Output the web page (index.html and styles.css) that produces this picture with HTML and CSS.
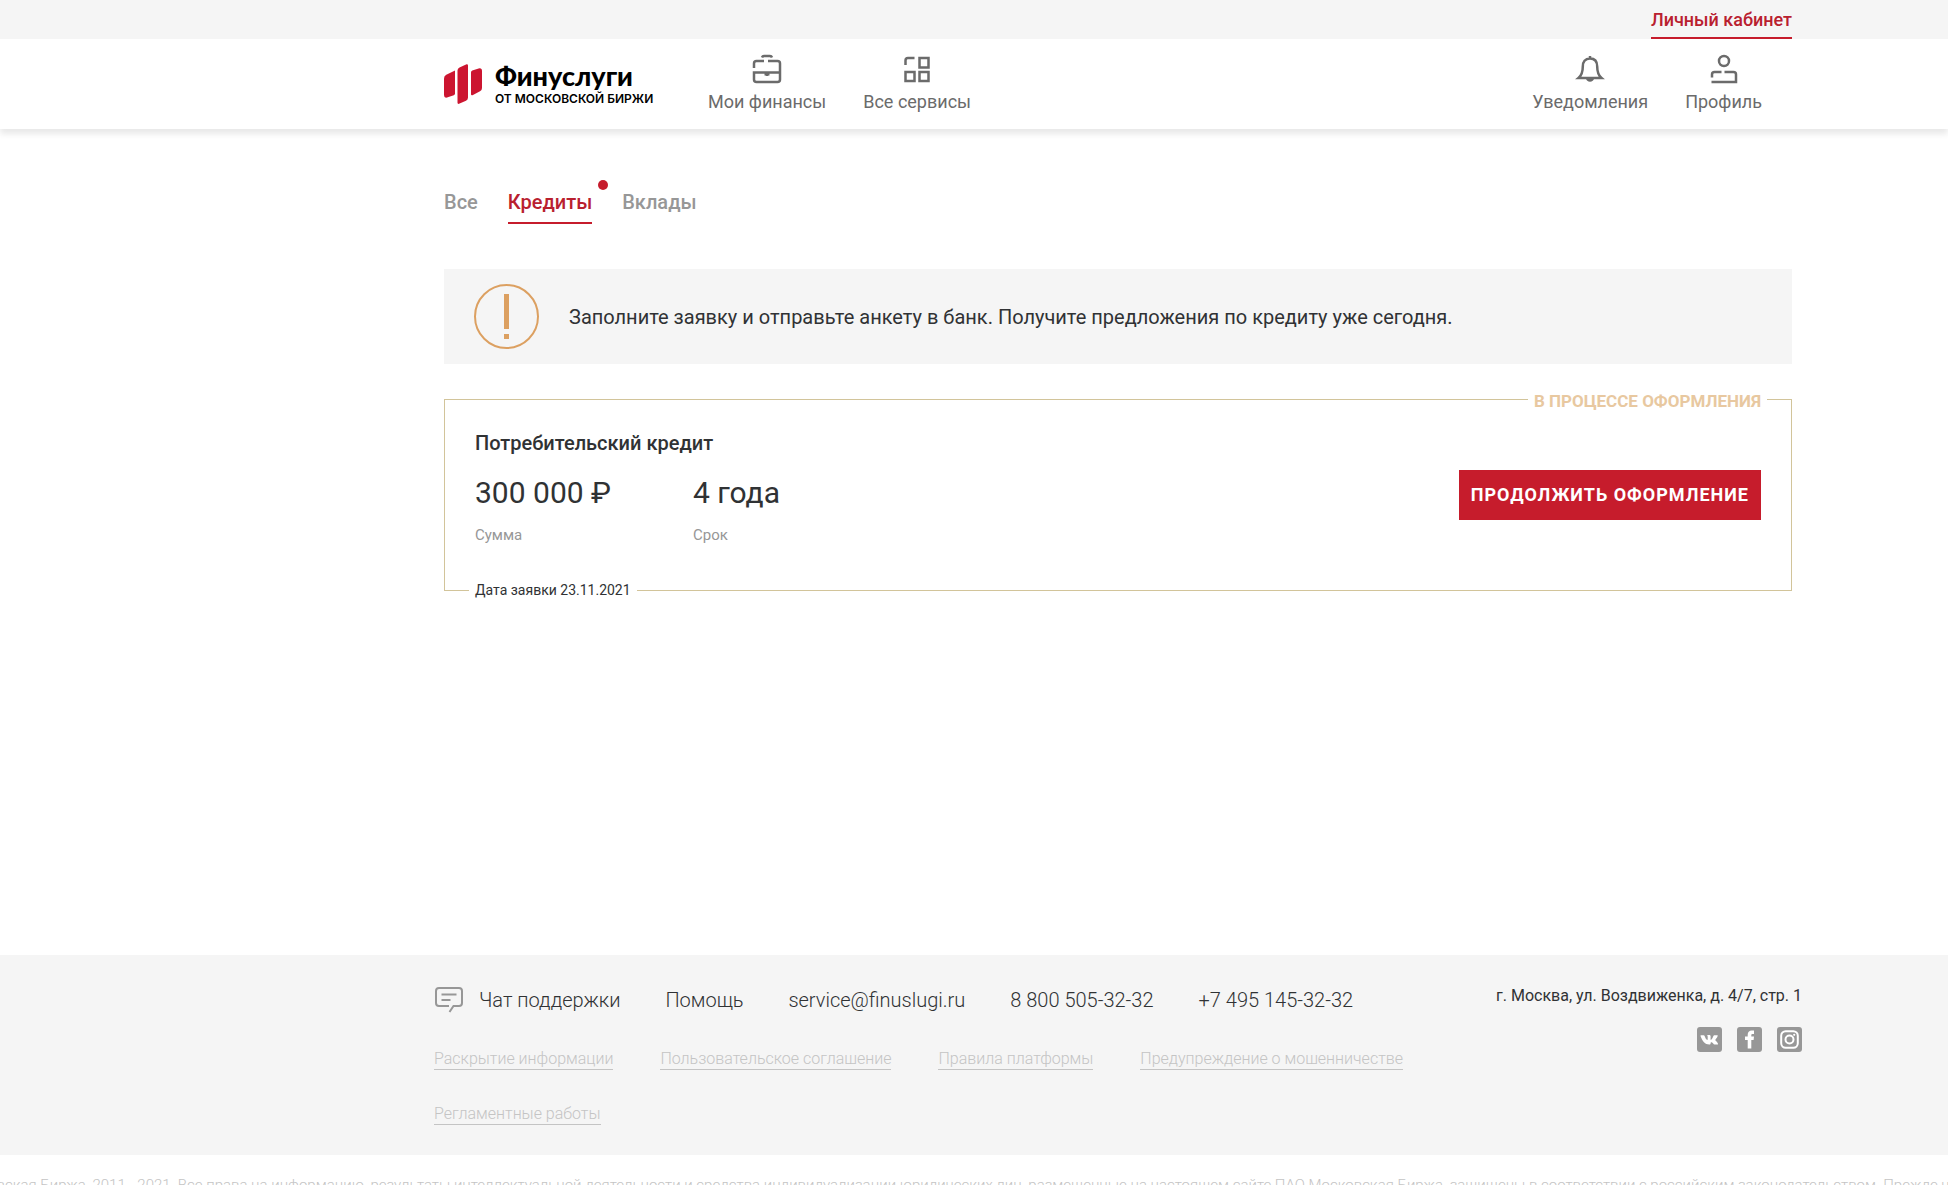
FILE: index.html
```html
<!DOCTYPE html>
<html lang="ru">
<head>
<meta charset="utf-8">
<meta name="viewport" content="width=device-width, initial-scale=1">
<title>Финуслуги — Личный кабинет</title>
<link rel="stylesheet" href="styles.css">
</head>
<body>
<div class="topbar">
  <a class="topbar-link" href="#">Личный кабинет</a>
</div>

<header class="header">
  <a class="logo" href="#">
    <svg class="logo-mark" viewBox="0 0 38 40" aria-hidden="true">
      <path d="M0 14.500q0-2.500 2.300-3.700L11 6.600V29.500q0 1.200-1.200 1.800L3 33.600Q0 34.300 0 31z"/>
      <path d="M13.500 6.500q0-2.200 2-3.100L22.600.2Q24 0 24 1.500V33.500q0 2.200-2 3.200L15 39.800q-1.500.400-1.500-1z"/>
      <path d="M27 8.500q0-1.400 1.300-2L34.600 4.500Q38 3.800 38 7V24q0 2.200-2 3.200L28.500 31.200Q27 31.700 27 30.200z"/>
    </svg>
    <span class="logo-text">
      <span class="logo-name">Финуслуги</span>
      <span class="logo-sub">ОТ МОСКОВСКОЙ БИРЖИ</span>
    </span>
  </a>
  <nav class="nav">
    <a class="nav-item" href="#">
      <svg class="icon" viewBox="0 0 28 28" aria-hidden="true">
        <path d="M9 2.500Q9.500 1 11 1h6q1.500 0 2 1.500M1 13V8.500Q1 6 3.500 6H11M15 6h9.500Q27 6 27 8.500v16q0 2.500-2.500 2.500h-21Q1 27 1 24.500V17.500h26M14 17v4"/>
        <path d="M11.500 18h5v2.500h-5z" fill="currentColor" stroke="none"/>
      </svg>
      <span>Мои финансы</span>
    </a>
    <a class="nav-item" href="#">
      <svg class="icon" viewBox="0 0 28 28" aria-hidden="true">
        <path d="M2.500 10V5.500q0-2.500 2.500-2.500h6.500M16.500 3h9v9.500h-9zM2.500 17h9v9h-9zM16.500 17h9v9h-9z"/>
      </svg>
      <span>Все сервисы</span>
    </a>
  </nav>
  <nav class="nav nav-user">
    <a class="nav-item" href="#">
      <svg class="icon" viewBox="0 0 28 28" aria-hidden="true">
        <path d="M14 1v2.500M14 3.500c-5 0-7.200 3.500-7.200 8 0 6-1.300 9-4.300 11.500h23c-3-2.500-4.300-5.500-4.300-11.500 0-4.500-2.200-8-7.200-8z"/>
        <path d="M10 23h8c0 5-8 5-8 0z" fill="currentColor" stroke="none"/>
      </svg>
      <span>Уведомления</span>
    </a>
    <a class="nav-item" href="#">
      <svg class="icon" viewBox="0 0 28 28" aria-hidden="true">
        <circle cx="14" cy="6" r="5"/>
        <path d="M2 22.500V19.500Q2 17 4.500 17H11.500M14.500 17h9q2.500 0 2.500 2.500V27H1.500"/>
      </svg>
      <span>Профиль</span>
    </a>
  </nav>
</header>

<main class="main">
  <nav class="tabs">
    <a class="tab" href="#">Все</a>
    <a class="tab tab-active" href="#" aria-current="page">Кредиты</a>
    <a class="tab" href="#">Вклады</a>
  </nav>

  <section class="notice">
    <svg class="notice-icon" viewBox="0 0 65 65" aria-hidden="true">
      <circle cx="32.500" cy="32.500" r="31.500"/>
      <path d="M30 10h5v35h-5zM30 50h5v5h-5z"/>
    </svg>
    <p class="notice-text">Заполните заявку и отправьте анкету в банк. Получите предложения по кредиту уже сегодня.</p>
  </section>

  <article class="card">
    <span class="card-status">В ПРОЦЕССЕ ОФОРМЛЕНИЯ</span>
    <div class="card-info">
      <h2 class="card-title">Потребительский кредит</h2>
      <dl class="facts">
        <div class="fact"><dt>Сумма</dt><dd>300 000 ₽</dd></div>
        <div class="fact"><dt>Срок</dt><dd>4 года</dd></div>
      </dl>
    </div>
    <button class="card-button" type="button">ПРОДОЛЖИТЬ ОФОРМЛЕНИЕ</button>
    <span class="card-date">Дата заявки 23.11.2021</span>
  </article>
</main>

<footer class="footer">
  <div class="footer-links">
    <div class="contacts">
      <a class="contact chat" href="#">
        <svg class="chat-icon" viewBox="0 0 29 26" aria-hidden="true">
          <path d="M15.500 25l4-6H25q3 0 3-3V4q0-3-3-3H5Q2 1 2 4v12q0 3 3 3h10M7.500 7.500h15M7.500 13h9"/>
        </svg>
        <span>Чат поддержки</span>
      </a>
      <a class="contact" href="#">Помощь</a>
      <a class="contact" href="#">service@finuslugi.ru</a>
      <a class="contact" href="#">8 800 505-32-32</a>
      <a class="contact" href="#">+7 495 145-32-32</a>
    </div>
    <div class="docs">
      <a class="doc" href="#">Раскрытие информации</a>
      <a class="doc" href="#">Пользовательское соглашение</a>
      <a class="doc" href="#">Правила платформы</a>
      <a class="doc" href="#">Предупреждение о мошенничестве</a>
      <a class="doc" href="#">Регламентные работы</a>
    </div>
  </div>
  <div class="footer-side">
    <address class="address">г. Москва, ул. Воздвиженка, д. 4/7, стр. 1</address>
    <div class="socials">
      <a href="#" aria-label="ВКонтакте">
        <svg class="social" viewBox="0 0 25 25" aria-hidden="true">
          <rect width="25" height="25" rx="3"/>
          <path class="glyph" d="M4 8.200h2.700c.4 0 .6.200.8.600.8 2.200 1.900 4.200 2.700 4.200.4 0 .5-.3.500-1V9.800c0-.8-.4-1-.9-1.100.3-.5.900-.7 1.800-.7 1.500 0 2 .2 2 1.300v3c0 .5.300.7.600.5.800-.6 1.700-2.300 2.200-3.700.2-.6.400-.8.900-.8h2.800c.7 0 .7.400.5.900-.5 1.400-2.300 3.400-2.300 3.800 0 .6 2.500 2.500 2.700 3.700.1.600-.3.900-.9.900h-2.600c-1 0-1.500-1.800-2.900-2.300-.7-.3-1 .1-1 1 0 1-.4 1.300-1.300 1.300-4.200 0-7-3.300-8.800-8.500-.1-.5 0-.9.500-.9z"/>
        </svg>
      </a>
      <a href="#" aria-label="Facebook">
        <svg class="social" viewBox="0 0 25 25" aria-hidden="true">
          <rect width="25" height="25" rx="3"/>
          <path class="glyph" d="M10.700 21.500V13H8V9.500h2.700V7.800c0-2.700 1.500-4.300 4-4.300H17V7h-1.400c-.9 0-1.300.4-1.300 1.200v1.300H17L16.600 13h-2.300v8.500z"/>
        </svg>
      </a>
      <a href="#" aria-label="Instagram">
        <svg class="social" viewBox="0 0 25 25" aria-hidden="true">
          <rect width="25" height="25" rx="3"/>
          <rect class="line" x="4.200" y="4.200" width="16.600" height="16.600" rx="4.500"/>
          <circle class="line" cx="12.500" cy="12.500" r="4"/>
          <circle class="glyph" cx="17.200" cy="7.800" r="1.100"/>
        </svg>
      </a>
    </div>
  </div>
</footer>

<p class="legal">© ПАО Московская Биржа, 2011 - 2021. Все права на информацию, результаты интеллектуальной деятельности и средства индивидуализации юридических лиц, размещенные на настоящем сайте ПАО Московская Биржа, защищены в соответствии с российским законодательством. Прежде чем</p>
</body>
</html>
```
FILE: styles.css
```css
:root {
  --red: #c61c2c;
  --gray-bg: #f5f5f5;
  --ink: #303234;
  --side-left: 444px;
  --side-right: 156px;
}

* { box-sizing: border-box; }

body {
  margin: 0;
  height: 100vh;
  overflow: hidden;
  display: flex;
  flex-direction: column;
  background: #fff;
  color: var(--ink);
  font-family: Roboto, "Noto Sans", sans-serif;
}

body > * { flex-shrink: 0; }

a { color: inherit; text-decoration: none; }
p, h2, dl, dd { margin: 0; }
svg { display: block; }

.topbar {
  display: flex;
  justify-content: flex-end;
  padding-right: var(--side-right);
  background: var(--gray-bg);
}

.topbar-link {
  height: 39px;
  border-bottom: 2px solid var(--red);
  color: #b9202f;
  font-size: 18px;
  font-weight: 500;
  line-height: 39px;
}

.header {
  display: flex;
  height: 90px;
  padding: 0 calc(var(--side-right) + 30px) 0 var(--side-left);
  box-shadow: 0 5px 6px rgba(0, 0, 0, 0.09);
}

.logo {
  display: flex;
  gap: 13px;
  padding-top: 25px;
  color: #000;
}

.logo-mark { width: 38px; height: 40px; fill: #cc1530; }

.logo-text { display: flex; flex-direction: column; width: 166px; }

.logo-name {
  font-family: Lato, "Open Sans", sans-serif;
  font-size: 27px;
  font-weight: 900;
  line-height: 24px;
}

.logo-sub {
  font-family: Inter, sans-serif;
  font-size: 12px;
  font-weight: 600;
  line-height: 22px;
  white-space: nowrap;
}

.nav {
  display: flex;
  gap: 37px;
  margin-left: 47px;
  padding-top: 16px;
  color: #6b6b6b;
  font-size: 18px;
  line-height: 24px;
}

.nav-user { margin-left: auto; }

.nav-item {
  display: flex;
  flex-direction: column;
  align-items: center;
  gap: 7px;
}

.icon {
  width: 28px;
  height: 28px;
  fill: none;
  stroke: currentColor;
  stroke-width: 2.5;
  overflow: visible;
}

.main {
  flex: 1 0 auto;
  padding: 58px var(--side-right) 0 var(--side-left);
}

.tabs { display: flex; gap: 30px; }

.tab {
  position: relative;
  height: 37px;
  color: #979797;
  font-size: 20px;
  font-weight: 500;
  line-height: 30px;
}

.tab-active { border-bottom: 2px solid var(--red); color: #b9202f; }

.tab-active::after {
  content: "";
  position: absolute;
  top: -7px;
  right: -16px;
  width: 10px;
  height: 10px;
  border-radius: 50%;
  background: var(--red);
}

.notice {
  display: flex;
  align-items: center;
  gap: 30px;
  height: 95px;
  margin-top: 45px;
  padding: 0 30px;
  background: var(--gray-bg);
}

.notice-icon { width: 65px; height: 65px; fill: #dca061; }
.notice-icon circle { fill: none; stroke: #dca061; stroke-width: 2; }
.notice-text { font-size: 20px; line-height: 30px; }

.card {
  position: relative;
  display: flex;
  justify-content: space-between;
  align-items: flex-start;
  height: 192px;
  margin-top: 35px;
  padding: 28px 30px 0;
  border: 1px solid #d2c49a;
}

.card-status,
.card-date {
  position: absolute;
  padding: 0 6px;
  background: #fff;
  line-height: 20px;
}

.card-status {
  top: -9px;
  right: 24px;
  color: #e8c8a0;
  font-size: 17px;
  font-weight: 700;
}

.card-date { bottom: -10px; left: 24px; font-size: 14px; }

.card-title { font-size: 20px; font-weight: 500; line-height: 30px; }

.facts { display: flex; gap: 82px; margin-top: 15px; }

.fact { display: flex; flex-direction: column-reverse; gap: 12px; }
.fact dt { color: #979797; font-size: 15px; line-height: 20px; }
.fact dd { font-size: 30px; line-height: 40px; }

.card-button {
  height: 50px;
  margin-top: 42px;
  padding: 0 12px;
  border: 0;
  background: var(--red);
  color: #fff;
  font: 700 18px/24px Roboto, "Noto Sans", sans-serif;
  letter-spacing: 1px;
}

.footer {
  display: flex;
  justify-content: space-between;
  height: 200px;
  padding: 30px calc(var(--side-right) - 10px) 0 calc(var(--side-left) - 10px);
  background: var(--gray-bg);
}

.footer-links { width: 1000px; }

.contacts { display: flex; gap: 45px; }

.contact { font-size: 20px; font-weight: 300; line-height: 30px; }

.chat { display: flex; align-items: center; gap: 16px; }

.chat-icon {
  width: 29px;
  height: 26px;
  fill: none;
  stroke: #979797;
  stroke-width: 2;
}

.docs {
  display: flex;
  flex-wrap: wrap;
  gap: 34px 47px;
  margin-top: 34px;
}

.doc {
  border-bottom: 1px solid #c4c4c4;
  color: #c4c4c4;
  font-size: 16px;
  font-weight: 300;
  line-height: 20px;
}

.address { font-size: 16px; font-style: normal; line-height: 22px; }

.socials {
  display: flex;
  justify-content: flex-end;
  gap: 15px;
  margin-top: 20px;
}

.social { width: 25px; height: 25px; fill: #979797; }
.social .glyph { fill: #fff; }
.social .line { fill: none; stroke: #fff; stroke-width: 2; }

.legal {
  height: 30px;
  padding-top: 20px;
  overflow: hidden;
  color: #c4c4c4;
  font-size: 15px;
  font-weight: 300;
  line-height: 20px;
  text-indent: -98px;
  white-space: nowrap;
}
```
